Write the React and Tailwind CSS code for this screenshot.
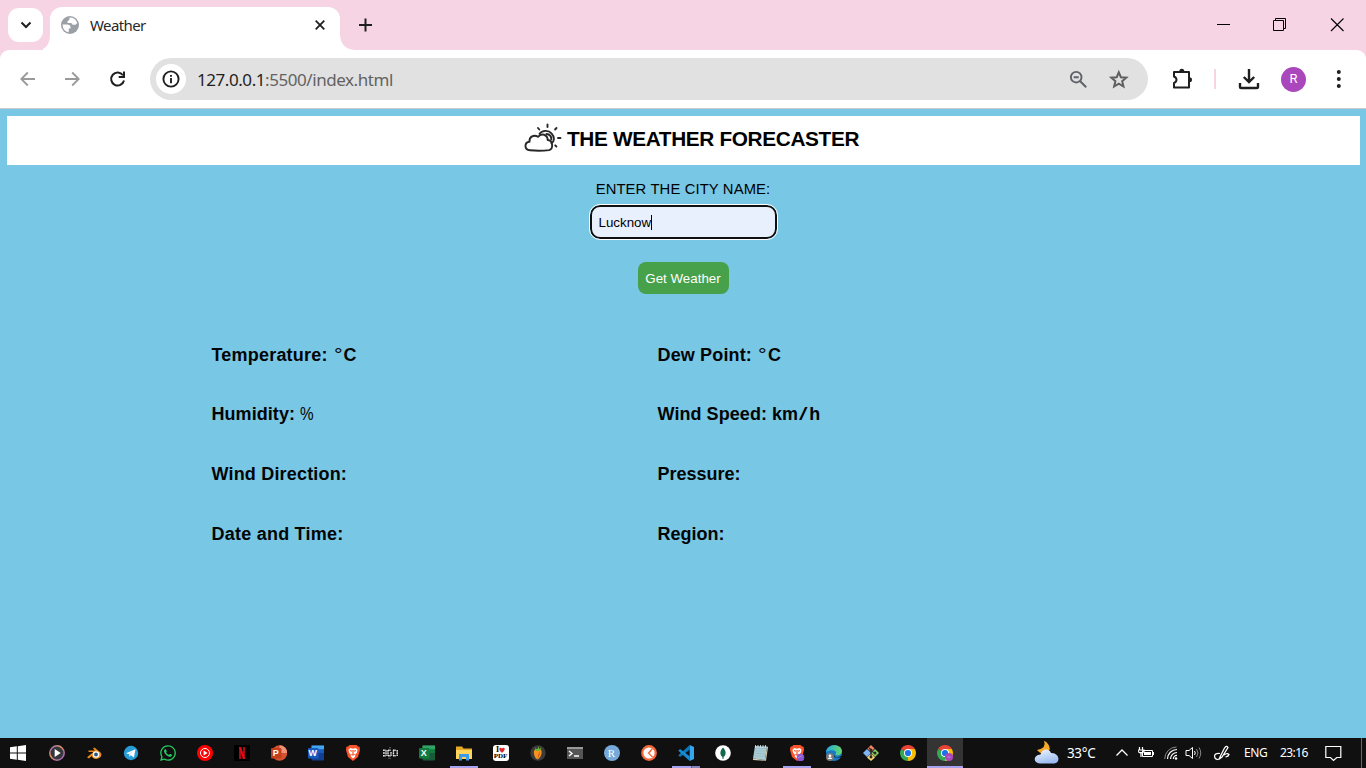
import React from "react";
import { FaWhatsapp } from "react-icons/fa";

function Svg({ w = 16, h = w, box = "0 0 16 16", children, className = "" }) {
  return (
    <svg width={w} height={h} viewBox={box} fill="none" className={`block shrink-0 ${className}`}>
      {children}
    </svg>
  );
}

function TabStrip() {
  return (
    <div className="flex h-[50px] items-start bg-[#f6d4e3]">
      <div className="ml-2 mt-2 flex h-[34px] w-[35px] items-center justify-center rounded-[11px] bg-white">
        <Svg w={12} box="0 0 12 12"><path d="M1.500 3.500 6 8l4.500-4.500" stroke="#1f1f1f" strokeWidth="2" /></Svg>
      </div>
      <div className="flex items-end pt-[35px]">
        <Svg w={7} h={15} box="0 0 7 15"><path d="M0 14Q7 10 7 0V15H0Z" fill="white" /></Svg>
      </div>
      <div className="mt-[7px] flex h-[43px] w-[290px] items-center rounded-t-[12px] bg-white pb-[7px] pl-[10px]">
        <Svg w={20} box="0 0 20 20">
          <circle cx="10" cy="10" r="9" fill="#9aa0a6" />
          <path d="M2.500 9.500H7Q10.500 9.500 10.500 12V13.500H8.700V17.300Q3 16.500 2.500 9.500ZM9.500 2.600Q15 2.400 17.300 8L15.500 9.800H13Q11.500 9.800 11.500 8H7.500V6Q9.500 6 9.500 2.600Z" fill="white" />
        </Svg>
        <span className="ml-[10px] w-[57px] whitespace-nowrap font-['Noto_Sans',sans-serif] text-[15px] tracking-[-0.600px] text-[#27272a]">Weather</span>
        <Svg w={12} box="0 0 12 12" className="ml-[167px]"><path d="m1.700 1.700 8.600 8.600m0-8.600-8.600 8.600" stroke="#1f1f1f" strokeWidth="1.800" /></Svg>
      </div>
      <Svg w={15} h={15} box="0 0 15 15" className="mt-[35px]"><path d="M0 0Q1 14 15 15H0Z" fill="white" /></Svg>
      <Svg w={14} box="0 0 14 14" className="ml-[3px] mt-[18px]"><path d="M7.500 .5v13M1 7h13" stroke="#1f1f1f" strokeWidth="2" /></Svg>
      <div className="ml-auto flex pt-[17px] pr-[21px]">
        <Svg w={16}><path d="M2 7.500h13" stroke="black" /></Svg>
        <Svg w={16} className="ml-10"><path d="M2.500 3.500h10v10h-10zM4.500 3V1.500h10v10H13" stroke="black" /></Svg>
        <Svg w={16} className="ml-[42px]"><path d="m2 1.500 12.500 12.500m0-12.500L2 14" stroke="black" strokeWidth="1.100" /></Svg>
      </div>
    </div>
  );
}

function Toolbar() {
  return (
    <div className="bg-[#f6d4e3]">
      <div className="flex h-[59px] items-center rounded-t-[9px] border-b border-[#c9cbcd] bg-white">
        <Svg w={18} box="0 0 18 18" className="ml-[19px]"><path d="M16 9H2.500M8.800 2.500 2.300 9l6.500 6.500" stroke="#9a9a9a" strokeWidth="1.800" /></Svg>
        <Svg w={18} box="0 0 18 18" className="ml-[27px]"><path d="M1 9h13.500M8.200 2.500 14.700 9l-6.500 6.500" stroke="#9a9a9a" strokeWidth="1.800" /></Svg>
        <Svg w={18} box="0 0 18 18" className="ml-[27px]">
          <path d="M14 5.300A6.500 6.500 0 1 0 15 10.500" stroke="#1f1f1f" strokeWidth="2" />
          <path d="M15 1.500v5.600H9.700" stroke="#1f1f1f" strokeWidth="2" />
        </Svg>
        <div className="ml-[23px] flex h-[42px] w-[998px] items-center rounded-full bg-[#e1e1e1] pl-[6px] pr-[19px]">
          <div className="flex size-[30px] items-center justify-center rounded-full bg-white">
            <Svg w={18} box="0 0 18 18">
              <circle cx="9" cy="9" r="7.600" stroke="#1f1f1f" strokeWidth="1.900" />
              <path d="M9 8v5.200M9 4.900v1.900" stroke="#1f1f1f" strokeWidth="1.900" />
            </Svg>
          </div>
          <span className="ml-[11px] mt-px whitespace-nowrap font-['Noto_Sans',sans-serif] text-[17px] tracking-[-0.440px] text-[#1f1f1f]">
            127.0.0.1<span className="text-[#636363]">:5500/index.html</span>
          </span>
          <Svg w={20} box="0 0 20 20" className="ml-auto">
            <circle cx="8.200" cy="8.200" r="5.300" stroke="#5f6368" strokeWidth="1.900" />
            <path d="M5.700 8.200h5M12.200 12.200l6 6" stroke="#5f6368" strokeWidth="2" />
          </Svg>
          <Svg w={21} box="0 0 21 21" className="ml-5">
            <path d="m10.800 3.300 2.100 4.900 5.400.45-4.100 3.550 1.250 5.300-4.650-2.850-4.650 2.850 1.250-5.300-4.100-3.550 5.400-.45Z" stroke="#5f5f5f" strokeWidth="2" />
          </Svg>
        </div>
        <Svg w={22} box="0 0 22 22" className="ml-[24px]">
          <path d="M2 4h15v15.500H2v-4.500q2.500-1 2.500-3.200T2 8.500Z" stroke="#1f1f1f" strokeWidth="2" strokeLinejoin="round" />
          <path d="M7.300 3.300a2.500 2.500 0 0 1 5 0ZM17.500 9.300a2.500 2.500 0 0 1 0 5Z" fill="#1f1f1f" />
        </Svg>
        <div className="ml-5 h-5 w-[2px] bg-[#f6d4e3]" />
        <Svg w={22} box="0 0 22 22" className="ml-[22px]">
          <path d="M11 1v13M5.800 9l5.200 5.100L16.200 9M2 15v3.700q0 1.300 1.300 1.300h15.400q1.300 0 1.300-1.300V15" stroke="#1f1f1f" strokeWidth="2.400" />
        </Svg>
        <div className="ml-[21px] flex size-[25px] items-center justify-center rounded-full bg-[#ab47bc] font-[Roboto,sans-serif] text-[13px] text-white">R</div>
        <Svg w={6} h={20} box="0 0 6 20" className="ml-[30px]">
          <g fill="#1f1f1f"><circle cx="2.800" cy="3" r="2" /><circle cx="2.800" cy="10" r="2" /><circle cx="2.800" cy="17" r="2" /></g>
        </Svg>
      </div>
    </div>
  );
}

function Reading({ label, unit, className = "" }) {
  return (
    <div className={`flex h-[60px] items-center whitespace-nowrap font-['Liberation_Sans',sans-serif] text-[18px] font-bold text-[#050505] ${className}`}>
      {label}
      {unit && <span className="ml-[5px] flex">{unit}</span>}
    </div>
  );
}

function Degrees() {
  return (
    <>
      <span className="ml-[1px] w-[10px] origin-left scale-x-120 font-normal">°</span>
      <span>C</span>
    </>
  );
}

function Page() {
  return (
    <main className="flex h-[629px] flex-col bg-[#78c7e5] px-[7px] pt-[7px] font-['Liberation_Sans',sans-serif] text-black">
      <header className="mr-[-1px] flex h-[49px] items-start bg-white pl-[517px] pt-[7px]">
        <Svg w={38} h={30} box="0 0 38 30">
          <g stroke="#282828" strokeWidth="1.900" strokeLinecap="round" strokeLinejoin="round">
            <path d="M6 27.300C-.2 26.800.3 19.200 5.500 18.800C5 13.500 10 11.200 14 13.800C17.500 9.500 23.500 11.500 23.700 17C29.500 17.500 29.300 26 25 27.100Q16 28.300 6 27.300Z" />
            <path d="M15.500 10.800C18 7.300 24.500 6.800 27.500 10.300C31 14 30.500 18.500 27.500 20.300M22.500 11Q27.500 11.500 27.300 16.500" />
            <path d="M23.500 1.500v2.500M14 5l1.300 1.500M32.500 5l-1.400 1.500M34 15h2.500M31.200 22.300l1.200 1.200" />
          </g>
        </Svg>
        <h1 className="ml-[5px] mt-[4px] whitespace-nowrap text-[20.800px] leading-6 font-bold tracking-[-0.360px]">THE WEATHER FORECASTER</h1>
      </header>
      <div className="flex flex-col items-center">
        <label className="mt-[14px] h-5 whitespace-nowrap text-[14.800px] leading-5 tracking-[0.130px]">ENTER THE CITY NAME:</label>
        <div className="mt-[6px] flex h-[34px] w-[187px] items-center rounded-[10px] border-2 border-[#101010] bg-[#e8f0fe] pl-[7px] text-[13.333px] leading-4 outline outline-1 outline-white">
          <span className="mt-px">Lucknow</span><span className="mt-px h-[15px] w-px bg-black" />
        </div>
        <button className="mt-[23px] flex h-[32px] w-[91px] items-center justify-center whitespace-nowrap rounded-[8px] bg-[#47a04a] pt-px text-[13.333px] text-white">Get Weather</button>
      </div>
      <section className="ml-[204px] mt-[31px] grid grid-cols-[446px_300px] grid-rows-[59px_60px_60px_60px] pl-[0.500px]">
        <Reading label="Temperature:" unit={<Degrees />} className="tracking-[0.200px]" />
        <Reading label="Dew Point:" unit={<Degrees />} className="tracking-[0.150px]" />
        <Reading label="Humidity:" unit={<span className="w-4 origin-left scale-x-85 font-normal">%</span>} className="tracking-[0.060px]" />
        <Reading label="Wind Speed:" unit={<>km<span className="mx-[1px] w-[9px] origin-left scale-x-170 font-normal">/</span>h</>} className="tracking-[0.060px]" />
        <Reading label="Wind Direction:" className="tracking-[0.180px]" />
        <Reading label="Pressure:" />
        <Reading label="Date and Time:" className="tracking-[0.230px]" />
        <Reading label="Region:" />
      </section>
    </main>
  );
}

function Chrome() {
  return (
    <>
      <path d="M8 8 1.100 4A8 8 0 0 1 14.900 4Z" fill="#ea4335" />
      <path d="M8 8 14.900 4A8 8 0 0 1 8 16Z" fill="#fbbc05" />
      <path d="M8 8v8A8 8 0 0 1 1.100 4Z" fill="#34a853" />
      <path d="M8 4h6.900L11.500 10Z" fill="#fbbc05" />
      <circle cx="8" cy="8" r="4" fill="white" /><circle cx="8" cy="8" r="3.100" fill="#1a73e8" />
    </>
  );
}

function Brave() {
  return (
    <>
      <path d="M4.500 0h7l1.500 1.500 1.600.3.400 3.200L13 12l-5 4-5-4L1 5l.4-3.200L3 1.500Z" fill="#fb542b" />
      <path d="m3.500 4.500 2-1.500L8 3.700l2.500-.7 2 1.500-.5 3-2 2.500.3 1.500L8 13.500 5.700 11.500 6 10 4 7.500Z" fill="white" />
      <path d="m5 5.500 2 .8M11 5.500l-2 .8M8 5v4M6.300 9.300 8 10l1.700-.7" stroke="#fb542b" strokeWidth="1.200" />
    </>
  );
}

function OfficeIcon({ letter, color, dark, light, round }) {
  return (
    <div className="relative size-4">
      <Svg>
        {round ? (
          <><circle cx="8.500" cy="8" r="7.700" fill={dark} /><path d="M8.500.3A7.700 7.700 0 0 1 16.200 8H8.500Z" fill={light} /></>
        ) : (
          <><rect x="3.500" y=".5" width="12.500" height="15" rx="1" fill={dark} /><path d="M3.500.5H16v7.500H3.500Z" fill={light} /><path d="M3.500 4.200H16V8H3.500Z" fill={color} /></>
        )}
        <rect x="0" y="3" width="10.500" height="10.500" rx="1" fill={color} />
      </Svg>
      <span className="absolute top-[3px] left-0 w-[10.500px] text-center font-['Liberation_Sans',sans-serif] text-[9px] leading-[11px] font-bold text-white">{letter}</span>
    </div>
  );
}

const apps = [
  <Svg><defs><linearGradient id="ring" x1="0" y1="0" x2="1" y2="1"><stop stopColor="#8461c9" /><stop offset=".4" stopColor="#e99a62" /><stop offset="1" stopColor="#8d57cf" /></linearGradient></defs><circle cx="8" cy="8" r="7.200" fill="#35373d" stroke="url(#ring)" strokeWidth="1.500" /><path d="m5.700 4 6 4-6 4Z" fill="white" /></Svg>,
  <Svg><path d="M1 12.300 7.500 7H2.500V5.500H9L7 3.500l1.500-1 6 5Q16.500 10 14 12.500q-3.500 2.500-7 .5L5.500 11 3 13.500Z" fill="#ed8b1c" /><circle cx="10" cy="9.500" r="3.200" fill="white" /><circle cx="10" cy="9.500" r="1.900" fill="#265787" /></Svg>,
  <Svg><circle cx="8" cy="8" r="7.200" fill="#279cd7" /><path d="m3 8.300 9.500-4-1.600 8.200-3.200-2.300-1.500 1.500-.2-2.500Z" fill="white" /><path d="m6 9.200 4.400-3.100-3.200 3.400-1 1.900Z" fill="#b7d8ea" /></Svg>,
  <FaWhatsapp size={18} color="#28cb61" />,
  <Svg><circle cx="8" cy="8" r="8" fill="#f00" /><circle cx="8" cy="8" r="4.500" stroke="white" /><path d="m6.600 5.500 4 2.500-4 2.500Z" fill="white" /></Svg>,
  <Svg><path d="M0 0h16v16H0Z" fill="black" /><path d="M5 2h2v12H5ZM9 2h2v12H9Z" fill="#a90b14" /><path d="M5 2h2.200L11 14H8.800Z" fill="#e50914" /></Svg>,
  <OfficeIcon letter="P" round color="#c43e1c" dark="#d35230" light="#ed9277" />,
  <OfficeIcon letter="W" color="#185abd" dark="#123f91" light="#42a6ee" />,
  <Svg><Brave /></Svg>,
  <Svg><path d="M1 5.200h3M1 8h3M1 10.800h3M4 5v6M6 5.200h3M6 10.800h3M6 5v6M9 7v4M11 5.200h3M11 10.800h3M11.500 5v6M15.200 5v6" stroke="#e4e4e4" strokeWidth="1.400" strokeDasharray="1.800 .5" /><path d="M7 2.500h2M8 3.500v2M6 13.300h3" stroke="#555" /></Svg>,
  <OfficeIcon letter="X" color="#107c41" dark="#185c37" light="#33a466" />,
  <Svg><path d="M0 1.500h6l1.500 2H16V14H0Z" fill="#e7aa27" /><path d="M0 5h16v9H0Z" fill="#ffd45b" /><path d="M3 15.500V9h10v6.500h-3V12H6v3.500Z" fill="#3a9cea" /></Svg>,
  <div className="flex size-4 flex-col items-center justify-center rounded-[3px] bg-white font-['Liberation_Serif',serif] text-[8px] leading-[7px] font-bold text-black"><span className="flex items-center">I<Svg w={6} box="0 0 6 6"><path d="M3 5.800C-2 2 1-.5 3 1.400 5-.5 8 2 3 5.800" fill="#e5252a" /></Svg></span><span className="text-[7px]">PDF</span></div>,
  <Svg><circle cx="8" cy="8" r="7.700" fill="#3b3b3b" /><path d="M4 6c1-3 7-3 7.500 0s-1 7-4 8.500C4.500 13 3.500 9 4 6Z" fill="#f6921e" /><path d="M5 2.500 7.500 5l1-4 .8 3 2-1.500-1 3-4.300.5Z" fill="#65b22e" /><path d="M10 6Q10.500 10 7.500 14 8 9 10 6Z" fill="#d95313" /></Svg>,
  <Svg><path d="M0 2h16v12H0Z" fill="#555" /><path d="M0 2h16v2H0Z" fill="#9a9a9a" /><path d="m2 6 3 2.500L2 11M7 11h5" stroke="white" strokeWidth="1.400" /></Svg>,
  <div className="flex size-4 items-center justify-center rounded-full bg-[#75aadb] font-['Liberation_Serif',serif] text-[11px] text-white">R</div>,
  <Svg><circle cx="8" cy="8" r="7.900" fill="#f4693a" /><circle cx="8" cy="8" r="5.600" fill="white" /><path d="m11.500 3.500-4 4.500 4 4M10 6 7.500 8l2 2" stroke="#f4693a" strokeWidth="1.300" /></Svg>,
  <Svg><path d="M.3 10.300 11.700 0v4.800L2 12Z" fill="#0876b9" /><path d="M.3 5.700 2 4l9.700 7.200V16Z" fill="#168bd2" /><path d="M11.700 0 16 2v12l-4.300 2Z" fill="#35a8ed" /></Svg>,
  <Svg><circle cx="8" cy="8" r="7.800" fill="white" /><path d="M8 2.500C4.500 6 4.500 10 8 12.500 11.500 10 11.500 6 8 2.500Z" fill="#136a4a" /><path d="M8 12v2" stroke="#136a4a" /></Svg>,
  <Svg><path d="m3 1 12 .5-2 13.500L1 13.500Z" fill="#aacbd3" /><path d="m15 1.500-2 13.500L1 13.500V15l13 .8L16 2Z" fill="#d8d1b4" /><path d="M3 3.500h11M3 6h10.500M2.500 8.500H13M2 11h11" stroke="#8eb5c0" strokeWidth=".5" /><path d="M3.500 0v2.500M6 0v2.500M8.500 0v2.500M11 0v2.500M13.500 0v2.500" stroke="#dff3f6" strokeWidth=".8" /></Svg>,
  <Svg><Brave /><circle cx="11.500" cy="12.500" r="3.800" fill="#8c55d5" /><path d="m8.500 13 5-2.500" stroke="#b48add" /></Svg>,
  <Svg><defs><linearGradient id="edge"><stop stopColor="#25a9df" /><stop offset="1" stopColor="#65d869" /></linearGradient></defs><circle cx="8" cy="8" r="8" fill="#1579c4" /><path d="M0 7C1-2 16-2 16 6.500 15.500 11 10 11 9 9.500 12 7 8 3 0 7Z" fill="url(#edge)" /><path d="M15 11Q9 14 7.500 9.500 7 14 15 12Z" fill="#111" /><circle cx="4" cy="12" r="4" fill="#777" /><circle cx="4" cy="10.800" r="1.400" fill="white" /><path d="M1.500 14q2.500-3.500 5 0Z" fill="white" /></Svg>,
  <Svg><path d="m8 0 3.500 3.500L8 7 4.500 3.500Z" fill="#f58568" /><path d="m4 4 4 4-4 4-4-4Z" fill="#81b5f3" /><path d="m12 4 4 4-4 4-4-4Z" fill="#8dcc63" /><path d="m8 8.500 4 4L8 16l-4-3.500Z" fill="#ffda74" /><path d="M6 2.500 8 5v7M8 6l4 2" stroke="#282828" strokeWidth="1.200" /><circle cx="8" cy="5" r="1.500" fill="#282828" /><circle cx="8" cy="12" r="1.500" fill="#282828" /><circle cx="12" cy="8" r="1.500" fill="#282828" /></Svg>,
  <Svg><Chrome /></Svg>,
  <Svg><Chrome /><circle cx="12" cy="12" r="4" fill="#ab47bc" /><path d="M10.500 12h3" stroke="#ca80d5" /></Svg>,
];

function underline(i) {
  if (i === 11 || i === 20) return "w-[28px] bg-[#a6a2ee]";
  if (i === 17) return "w-[28px] bg-[linear-gradient(to_right,#a6a2ee_19px,#5f5d88_19px,#5f5d88_20px,#8583be_20px)]";
  if (i === 24) return "w-[36px] bg-[#a6a2ee]";
  return "w-0";
}

function Taskbar() {
  return (
    <div className="flex h-[30px] items-center bg-[#101010] font-['Noto_Sans',sans-serif] text-[12px] text-white">
      <div className="flex w-[38px] shrink-0 justify-center pr-[2px]">
        <Svg><path d="M0 2.300 6.800 1.300v6.200H0ZM7.800 1.200 16 0v7.500H7.800ZM0 8.500h6.800v6.200L0 13.700ZM7.800 8.500H16V16l-8.200-1.200Z" fill="white" /></Svg>
      </div>
      {apps.map((icon, i) => (
        <div key={i} className="flex h-[30px] w-[37px] shrink-0 flex-col items-center">
          <div className={`flex h-[28px] items-center justify-center pt-[2px] ${i === 24 ? "ml-px w-[36px] bg-[#343434]" : "w-[37px]"}`}>{icon}</div>
          <div className={`h-[2px] ${i === 24 ? "ml-px" : ""} ${underline(i)}`} />
        </div>
      ))}
      <Svg w={26} h={24} box="0 0 26 24" className="ml-[71px]">
        <defs><linearGradient id="cloud" x1="0" y1="0" x2=".4" y2="1"><stop stopColor="#f3f7ff" /><stop offset="1" stopColor="#9dbdf1" /></linearGradient></defs>
        <path d="M10 0Q13 7 3 9 7 14 13 12 18 8 14 3 12 0 10 0Z" fill="#f6a82b" />
        <path d="M6 22.500C-1.500 22-.7 14 6.500 13.500 8 7 15.500 7 17 12 25 11.500 27.500 21.500 20 22.500Z" fill="url(#cloud)" />
      </Svg>
      <span className="ml-[7px] w-[30px] whitespace-nowrap text-[13.500px] tracking-[-0.350px]">33°C</span>
      <Svg w={12} box="0 0 12 12" className="ml-[19px]"><path d="m.5 8.500 5.500-5.500 5.500 5.500" stroke="white" strokeWidth="1.300" /></Svg>
      <Svg w={17} h={14} box="0 0 17 14" className="ml-[10px]"><path d="M1.500 1v3M4.500 1v3M0 4h6v1.500q-3 3-6 0ZM3 6v5" stroke="white" strokeWidth="1.200" /><path d="M4.500 4.500h10v6h-10Z" stroke="white" /><path d="M6 6h7v3H6ZM15 6h1v3h-1Z" fill="white" /></Svg>
      <Svg w={14} h={14} box="0 0 14 14" className="ml-[9px]"><path d="M3.500 13A9.500 9.500 0 0 1 13 3.500M6.500 13A6.500 6.500 0 0 1 13 6.500M9.300 13A3.700 3.700 0 0 1 13 9.300" stroke="white" strokeWidth="1.200" /><path d="M.7 13A12 12 0 0 1 12.500 1" stroke="#888" /><circle cx="12" cy="12.500" r="1.300" fill="white" /></Svg>
      <Svg w={17} h={14} box="0 0 17 14" className="ml-[7px]"><path d="M1 4.500h3l3.500-3v11L4 9.500H1Z" stroke="white" /><path d="M9.500 5q1.500 2 0 4" stroke="white" /><path d="M11.500 3q3 4 0 8M14 1.500q3.500 5.500 0 11" stroke="#868686" /></Svg>
      <Svg w={18} h={16} box="0 0 18 16" className="ml-[11px]"><path d="M7 8.500Q2 8 1.500 11q0 3 3 3.500 2 0 2.500-2.500L11.500 3q2-3 3.500-.5L9 12l-2 1.500.5-3M11 10q3-2.500 5-.5-.5 2-3.500 2.500" stroke="white" strokeWidth="1.250" /></Svg>
      <span className="ml-[13px] w-[25px] whitespace-nowrap text-[12px] tracking-[-0.400px]">ENG</span>
      <span className="ml-[11px] w-[28px] whitespace-nowrap text-[12px] tracking-[-0.600px]">23:16</span>
      <Svg w={17} h={17} box="0 0 17 17" className="ml-[17px]"><path d="M.8 1.500h15v11h-4L8.500 15.500l-3-3H.8Z" stroke="white" strokeWidth="1.200" /></Svg>
      <div className="ml-auto mr-[4px] h-[30px] w-px bg-[#686868]" />
    </div>
  );
}

export default function App() {
  return (
    <div className="h-[768px] w-[1366px] overflow-hidden bg-white">
      <TabStrip />
      <Toolbar />
      <Page />
      <Taskbar />
    </div>
  );
}
